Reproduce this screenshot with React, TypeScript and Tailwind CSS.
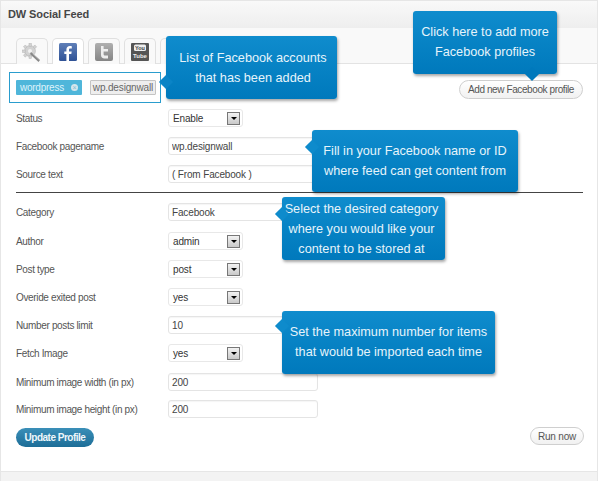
import type { ReactNode } from "react"

function Callout({ className, arrow, children }: { className: string; arrow: string; children: ReactNode }) {
  return (
    <div className={`absolute z-10 flex flex-col items-center justify-center rounded-[3px] bg-gradient-to-b from-[#0f8ccd] to-[#0079bc] text-center text-[12.7px] leading-[20px] text-[#e6f4fb] shadow-[1px_2px_3px_rgba(0,0,0,0.35)] ${className}`}>
      {children}
      <span className={`absolute h-[10px] w-[10px] rotate-45 ${arrow}`} />
    </div>
  )
}

function Label({ children }: { children: ReactNode }) {
  return <span className="w-[152px] shrink-0 pt-[3px] text-[10px] leading-[14px] tracking-[-0.35px] text-[#555]">{children}</span>
}

function TextRow({ label, value, className = "h-[28px]" }: { label: string; value: string; className?: string }) {
  return (
    <div className={`flex items-start ${className}`}>
      <Label>{label}</Label>
      <input
        readOnly
        value={value}
        className="h-[18px] w-[150px] rounded-[3px] border border-[#e4e4e4] bg-white px-[3px] pt-px text-[10px] tracking-[-0.15px] text-[#444] shadow-[inset_0_1px_1px_rgba(0,0,0,0.04)] outline-none"
      />
    </div>
  )
}

function SelectRow({ label, value, className = "h-[28px]" }: { label: string; value: string; className?: string }) {
  return (
    <div className={`flex items-start ${className}`}>
      <Label>{label}</Label>
      <div className="flex h-[18px] w-[75px] items-center justify-between rounded-[3px] border border-[#e8e8e8] bg-white pl-[4px] pr-[2px] text-[10px] tracking-[-0.15px] text-[#333]">
        <span>{value}</span>
        <span className="flex h-[13px] w-[13px] items-center justify-center border border-[#777] bg-gradient-to-b from-[#f2f2f2] to-[#c9c9c9]">
          <span className="mt-[1px] border-x-[3px] border-t-[3px] border-x-transparent border-t-black" />
        </span>
      </div>
    </div>
  )
}

function GearIcon() {
  return (
    <svg width="20" height="20" viewBox="0 0 20 20">
      <g fill="#d2d2d2" stroke="#b5b5b5" strokeWidth="0.5">
        <circle cx="8" cy="8" r="5.5" />
        <rect x="7" y="0.5" width="2.4" height="3" />
        <rect x="0.5" y="7" width="3" height="2.4" />
        <rect x="7" y="12.5" width="2.4" height="3" />
        <rect x="2" y="2.5" width="2.6" height="2.6" transform="rotate(45 3.3 3.8)" />
        <rect x="11.5" y="2.5" width="2.6" height="2.6" transform="rotate(45 12.8 3.8)" />
        <rect x="2" y="11" width="2.6" height="2.6" transform="rotate(45 3.3 12.3)" />
      </g>
      <circle cx="8" cy="8" r="2" fill="#f2f2f2" />
      <path d="M9 9l9 8-1.500 2-8.500-8z" fill="#888" />
      <path d="M11 11l6 5.500" stroke="#bbb" strokeWidth="0.7" />
    </svg>
  )
}

function FacebookIcon() {
  return (
    <svg width="18" height="18" viewBox="0 0 18 18">
      <defs>
        <linearGradient id="fb" x1="0" y1="0" x2="0" y2="1">
          <stop offset="0" stopColor="#5f7fb8" />
          <stop offset="1" stopColor="#2f5296" />
        </linearGradient>
      </defs>
      <rect width="18" height="18" rx="1.500" fill="url(#fb)" />
      <path d="M10 18v-7h2.300l.4-2.600H10V6.800c0-.8.300-1.300 1.300-1.300h1.500V3.200c-.4 0-1.200-.1-2-.1-2 0-3.400 1.200-3.400 3.400v1.900H5.300V11h2.100v7z" fill="#fff" />
    </svg>
  )
}

function TwitterIcon() {
  return (
    <svg width="18" height="18" viewBox="0 0 18 18">
      <defs>
        <linearGradient id="tw" x1="0" y1="0" x2="0" y2="1">
          <stop offset="0" stopColor="#b0b0b0" />
          <stop offset="1" stopColor="#858585" />
        </linearGradient>
      </defs>
      <rect width="18" height="18" rx="2" fill="url(#tw)" />
      <path d="M6 3h2.600v3h4.400v2.500H8.600v2.400c0 1.300.7 1.700 1.700 1.700H13V15.500H9.600C7.300 15.500 6 14.200 6 12z" fill="#eee" />
    </svg>
  )
}

function YoutubeIcon() {
  return (
    <svg width="18" height="18" viewBox="0 0 18 18">
      <rect width="18" height="18" rx="1" fill="#555" />
      <rect x="3" y="1.500" width="12" height="6.500" rx="1.500" fill="#eee" />
      <text x="9" y="6.700" textAnchor="middle" fontSize="5.500" fontWeight="700" fill="#444">You</text>
      <text x="9" y="15" textAnchor="middle" fontSize="6" fontWeight="700" fill="#eee">Tube</text>
    </svg>
  )
}

function Tab({ active = false, children }: { active?: boolean; children?: ReactNode }) {
  return (
    <div className={`-mb-px flex h-[26px] w-[32px] items-start justify-center rounded-t-[5px] border border-b-0 border-[#e0e0e0] pt-[4px] ${active ? "z-[1] bg-white" : "bg-[#f9f9f9]"}`}>
      {children}
    </div>
  )
}

export default function App() {
  return (
    <div className="relative h-[482px] w-[600px] overflow-hidden bg-white font-['Liberation_Sans',Arial,sans-serif]">
      <div className="flex h-[481px] w-[598px] flex-col border border-b-0 border-[#e6e6e6]">
        {/* Header */}
        <div className="flex h-[27px] shrink-0 items-center bg-gradient-to-b from-[#f9f9f9] to-[#eeeeee] pl-[7px] text-[11px] font-bold tracking-[-0.1px] text-[#464646]">
          DW Social Feed
        </div>

        {/* Tabs */}
        <div className="flex h-[36px] shrink-0 items-end gap-[4px] border-b border-[#e3e3e3] bg-[#f9f9f9] pl-[15px]">
          <Tab><GearIcon /></Tab>
          <Tab active><FacebookIcon /></Tab>
          <Tab><TwitterIcon /></Tab>
          <Tab><YoutubeIcon /></Tab>
          <Tab />
        </div>

        <div className="flex flex-1 flex-col">
          {/* Accounts */}
          <div className="ml-[8px] mt-[8px] flex h-[31px] w-[152px] items-center gap-[8px] border border-[#2a9dce] pl-[6px]">
            <span className="flex h-[15px] w-[66px] items-center justify-between rounded-[1px] bg-[#4fb6da] px-[4px] text-[10px] tracking-[-0.25px] text-[#dff3fa]">
              wordpress
              <span className="flex h-[7px] w-[7px] items-center justify-center rounded-full bg-[#d5e6ec] text-[7px] leading-none text-[#7fbcd2]">×</span>
            </span>
            <span className="flex h-[15px] w-[66px] items-center justify-center rounded-[1px] border border-[#c4c4c4] bg-[#eeeeee] text-[10px] tracking-[-0.15px] text-[#666]">
              wp.designwall
            </span>
          </div>

          {/* Form */}
          <div className="mt-[6px] px-[15px]">
            <SelectRow label="Status" value="Enable" />
            <TextRow label="Facebook pagename" value="wp.designwall" />
            <TextRow label="Source text" value="( From Facebook )" />
            <div className="-mt-px h-[11px]">
              <div className="h-px w-[567px] bg-[#444]" />
            </div>
            <TextRow label="Category" value="Facebook" className="h-[29px]" />
            <SelectRow label="Author" value="admin" />
            <SelectRow label="Post type" value="post" />
            <SelectRow label="Overide exited post" value="yes" />
            <TextRow label="Number posts limit" value="10" />
            <SelectRow label="Fetch Image" value="yes" className="h-[29px]" />
            <TextRow label="Minimum image width (in px)" value="200" className="h-[27px]" />
            <TextRow label="Minimum image height (in px)" value="200" />
            <div className="flex items-start justify-between">
              <button className="h-[19px] w-[78px] rounded-full bg-gradient-to-b from-[#3a8fb8] to-[#1c6d97] text-[10px] font-bold tracking-[-0.5px] text-[#eef7fb]">
                Update Profile
              </button>
              <button className="-mt-px mr-[-2px] h-[18px] w-[54px] rounded-full border border-[#cfcfcf] bg-gradient-to-b from-white to-[#f1f1f1] text-[10px] tracking-[-0.2px] text-[#555]">
                Run now
              </button>
            </div>
          </div>
        </div>

        {/* Footer */}
        <div className="h-[10px] shrink-0 border-t border-[#e6e6e6] bg-[#f3f3f3]" />
      </div>

      <button className="absolute left-[459px] top-[80px] h-[19px] w-[124px] rounded-full border border-[#cfcfcf] bg-gradient-to-b from-white to-[#f1f1f1] text-[10px] tracking-[-0.4px] text-[#555]">
        Add new Facebook profile
      </button>

      <Callout className="left-[166px] top-[36px] h-[63px] w-[171px] pl-[3px]" arrow="left-[-5px] top-[41px] bg-[#0b84c6]">
        <p>List of Facebook accounts</p>
        <p>that has been added</p>
      </Callout>
      <Callout className="left-[413px] top-[11px] h-[63px] w-[144px] pb-[2px]" arrow="bottom-[-5px] left-[114px] bg-[#0079bc]">
        <p>Click here to add more</p>
        <p>Facebook profiles</p>
      </Callout>
      <Callout className="left-[312px] top-[130px] h-[62px] w-[206px]" arrow="left-[-5px] top-[12px] bg-[#0e8bcc]">
        <p>Fill in your Facebook name or ID</p>
        <p>where feed can get content from</p>
      </Callout>
      <Callout className="left-[282px] top-[197px] h-[63px] w-[163px] pr-[4px]" arrow="left-[-5px] top-[12px] bg-[#0e8bcc]">
        <p>Select the desired category</p>
        <p>where you would like your</p>
        <p>content to be stored at</p>
      </Callout>
      <Callout className="left-[282px] top-[311px] h-[63px] w-[213px] pb-[2px]" arrow="left-[-5px] top-[10px] bg-[#0e8bcc]">
        <p>Set the maximum number for items</p>
        <p>that would be imported each time</p>
      </Callout>
    </div>
  )
}
